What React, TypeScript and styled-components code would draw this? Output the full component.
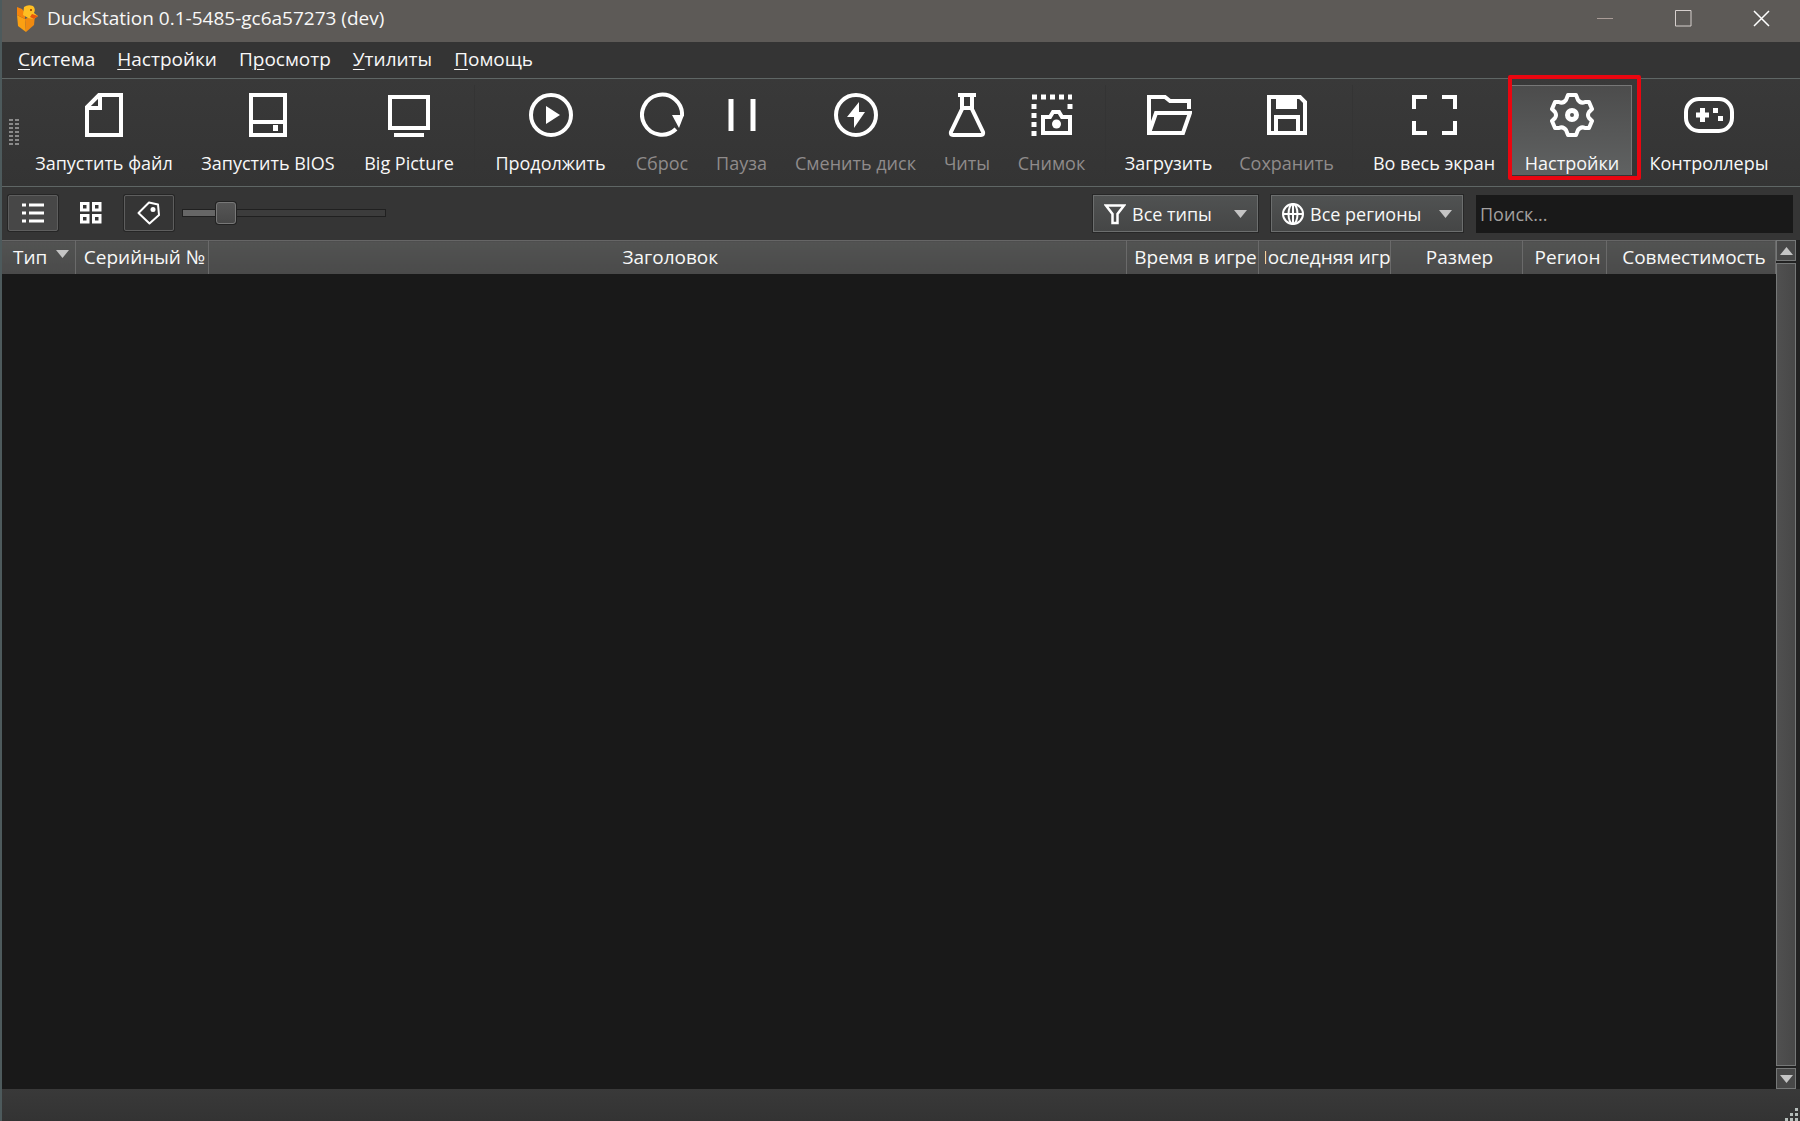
import React from "react";
import styled, { createGlobalStyle, css } from "styled-components";

const Global = createGlobalStyle`
  * { box-sizing: border-box; }
  html, body { margin: 0; background: #353535; }
  body, button, input, select {
    font-family: "Open Sans", "Noto Sans", sans-serif;
    font-size: 18px;
    line-height: 24px;
    color: #f8f8f8;
  }
  button, input, select { margin: 0; border: 0; padding: 0; background: none; border-radius: 0; }
  svg { display: block; flex: none; }
`;

const Window = styled.div`
  display: flex;
  flex-direction: column;
  height: 100vh;
  border-left: 2px solid #4d5a5c;
  background: #353535;
  overflow: hidden;
`;

const TitleBar = styled.header`
  display: flex;
  align-items: center;
  height: 42px;
  flex: none;
  padding: 0 0 6px 12px;
  background: #5d5a57;
`;

const Title = styled.h1`
  margin: 0 0 0 9px;
  flex: 1;
  font-size: 19px;
  font-weight: 400;
`;

const WindowButton = styled.button`
  display: grid;
  place-items: center;
  width: 78px;
  height: 36px;
`;

const MenuBar = styled.nav`
  display: flex;
  align-items: flex-start;
  gap: 22px;
  height: 36px;
  flex: none;
  padding: 5px 16px 0;
  background: #343434;
`;

const MenuButton = styled.button`
  font-size: 19px;
  u { text-underline-offset: 3px; text-decoration-thickness: 1px; }
`;

const ToolBar = styled.div`
  display: flex;
  align-items: flex-start;
  height: 109px;
  flex: none;
  padding: 6px 7px;
  border-top: 1px solid #5f6665;
  border-bottom: 1px solid #5f6665;
  background: linear-gradient(#393939, #343434);
`;

const Grip = styled.div`
  align-self: center;
  width: 10px;
  height: 28px;
  margin-right: 2px;
  background: repeating-linear-gradient(#8a8a8a 0 2px, transparent 2px 4px);
  mask: linear-gradient(90deg, #000 0 4px, transparent 4px 6px, #000 6px);
`;

const Separator = styled.div`
  width: 1px;
  height: 90px;
  margin: 0 5px;
  background: #343434;
`;

const Tool = styled.button<{ $width: number; $active?: boolean }>`
  display: flex;
  flex-direction: column;
  align-items: center;
  gap: 13px;
  flex: none;
  width: ${(p) => p.$width}px;
  height: 90px;
  padding-top: 7px;
  white-space: nowrap;
  &:disabled { color: #8f8b8b; }
  ${(p) =>
    p.$active &&
    css`
      position: relative;
      margin: 0 2px;
      background: linear-gradient(#4c4c4c, #606262);
      box-shadow: inset -1px 1px #777;
      &::after {
        content: "";
        position: absolute;
        inset: -10px -9px -5px -4px;
        border: 4px solid #ea0610;
        border-radius: 2px;
      }
    `}
`;

const Filters = styled.div`
  display: flex;
  align-items: center;
  height: 53px;
  flex: none;
  padding: 0 7px 0 6px;
`;

const ViewButton = styled.button<{ $framed?: boolean; $pressed?: boolean }>`
  display: grid;
  place-items: center;
  width: 50px;
  height: 36px;
  margin-right: 8px;
  border: 1px solid ${(p) => (p.$framed ? "#5e5e5e" : "transparent")};
  border-radius: 2px;
  background: ${(p) => (p.$pressed ? "#474747" : "transparent")};
  box-shadow: ${(p) => (p.$framed ? "0 0 0 1px #262626" : "none")};
`;

const Slider = styled.input`
  appearance: none;
  width: 204px;
  height: 22px;
  &::-webkit-slider-runnable-track {
    height: 8px;
    border: 1px solid #202020;
    background: linear-gradient(90deg, #666 0 20%, #3c3c3c 20%);
  }
  &::-webkit-slider-thumb {
    appearance: none;
    width: 20px;
    height: 22px;
    margin-top: -8px;
    border: 1px solid #787878;
    border-radius: 3px;
    background: linear-gradient(#565656, #484848);
    box-shadow: 0 0 0 1px #222;
  }
`;

const ViewControls = styled.div`
  display: flex;
  flex: 1;
  align-items: center;
  padding-bottom: 2px;
`;

const Combo = styled.label<{ $width: number }>`
  display: grid;
  grid-template-columns: 22px 1fr 14px;
  align-items: center;
  gap: 6px;
  width: ${(p) => p.$width}px;
  height: 37px;
  margin-right: 13px;
  padding: 0 9px 0 10px;
  border: 1px solid #6c6e6e;
  background: linear-gradient(#505252, #454646);
  box-shadow: 0 0 0 1px #272727;
`;

const Select = styled.select`
  appearance: none;
  min-width: 0;
  height: 24px;
`;

const Search = styled.input`
  width: 317px;
  height: 38px;
  padding: 0 4px;
  background: #191919;
  &::placeholder { color: #a3a09f; opacity: 1; }
`;

const Content = styled.main`
  display: flex;
  flex: 1;
  min-height: 0;
  background: #191919;
`;

const TableArea = styled.div`
  flex: 1;
  min-width: 0;
`;

const Table = styled.table`
  width: 100%;
  table-layout: fixed;
  border-collapse: collapse;
`;

const Head = styled.th<{ $width?: number }>`
  width: ${(p) => (p.$width ? `${p.$width}px` : "auto")};
  height: 33px;
  padding: 0 0 0 6px;
  font-size: 19px;
  font-weight: 400;
  background: linear-gradient(#525352, #4a4a4a);
  border-top: 1px solid #666;
  border-right: 1px solid #6a6a6a;
`;

const HeadLabel = styled.div`
  display: flex;
  justify-content: center;
  gap: 9px;
  overflow: hidden;
  white-space: nowrap;
  svg { margin-top: 5px; }
`;

const ScrollBar = styled.div`
  display: flex;
  flex-direction: column;
  gap: 2px;
  width: 24px;
  padding-right: 4px;
  background: #222;
`;

const ScrollButton = styled.button`
  display: grid;
  place-items: center;
  height: 21px;
  border: 1px solid #767878;
  background: #484848;
`;

const ScrollThumb = styled.div`
  flex: 1;
  border: 1px solid #767878;
  background: linear-gradient(90deg, #505050, #484848);
`;

const StatusBar = styled.footer`
  display: flex;
  align-items: flex-end;
  justify-content: flex-end;
  height: 32px;
  flex: none;
  padding-right: 2px;
  background: linear-gradient(#393939, #333);
`;

const Arrow = ({ up }: { up?: boolean }) => (
  <svg width="13" height="8" viewBox="0 0 13 8">
    <path d={up ? "M0 8 6.500 0 13 8Z" : "M0 0H13L6.500 8Z"} fill="#c4c4c4" />
  </svg>
);

const Icon = ({ children, size = 44 }: { children: React.ReactNode; size?: number }) => (
  <svg width={size} height="46" viewBox={`${(44 - size) / 2} 0 ${size} 46`} fill="none" stroke="#fff" strokeWidth="4">
    {children}
  </svg>
);

const icons = {
  file: <path d="M17 3H39V43H5V15ZM18 3V16H5" />,
  bios: (
    <>
      <path d="M5 3H39V43H5ZM5 30H39" />
      <path d="M27 33H32V39H27Z" fill="#fff" stroke="none" />
    </>
  ),
  screen: <path d="M3 5H41V36H3ZM7 43H37" />,
  resume: (
    <>
      <circle cx="22" cy="23" r="20" />
      <path d="M17 14 31 23 17 32Z" fill="#fff" stroke="none" />
    </>
  ),
  reset: (
    <>
      <path d="M36 37A20 20 0 1 1 42 24" />
      <path d="M32 23H44L39 36Z" fill="#fff" stroke="none" />
    </>
  ),
  pause: <path d="M11 7V39M33 7V39" strokeWidth="5" />,
  disc: (
    <>
      <circle cx="22" cy="23" r="20" />
      <path d="M25 10 13 25H20V36L31 20H25Z" fill="#fff" stroke="none" />
    </>
  ),
  cheats: <path d="M13 3H31M17 3V17L6 40Q5 43 8 43H36Q39 43 38 40L27 17V3M17 16H27" />,
  shot: (
    <>
      <path d="M2 5H42" strokeWidth="5" strokeDasharray="5 4" />
      <path d="M4 12V44M40 12V19" strokeWidth="5" strokeDasharray="5 4" />
      <path d="M13 25H20L23 20H29L32 25H40V41H13Z" />
      <circle cx="26.500" cy="32" r="4.500" fill="#fff" stroke="none" />
    </>
  ),
  load: <path d="M42 17V9H23L18 5H2V41H36L43 21H9L2 41" />,
  save: (
    <>
      <path d="M4 5H35L40 10V41H4Z" />
      <path d="M11 3H32V17H11Z" fill="#fff" stroke="none" />
      <path d="M11 41V25H33V41" />
    </>
  ),
  full: <path d="M2 17V5H15M30 5H43V17M43 29V41H30M15 41H2V29" />,
  gear: (
    <>
      <path
        d="M18 3H26L28 8Q31 12 35 10L39 10L42 17L39 20Q37 23 39 26L42 29L39 36L35 36Q31 34 28 38L26 43H18L16 38Q13 34 9 36L5 36L2 29L5 26Q7 23 5 20L2 17L5 10L9 10Q13 12 16 8Z"
        strokeLinejoin="round"
      />
      <circle cx="22" cy="23" r="4.500" strokeWidth="5" />
    </>
  ),
  pad: (
    <>
      <rect x="-1" y="7" width="46" height="32" rx="13" />
      <path d="M9 23H22M15.500 16V30" strokeWidth="5" />
      <path d="M26 16H31V21H26ZM31 24H36V29H31Z" fill="#fff" stroke="none" />
    </>
  ),
};

type ToolDef = { label: string; icon: keyof typeof icons; width: number; disabled?: boolean; active?: boolean };
const groups: ToolDef[][] = [
  [
    { label: "Запустить файл", icon: "file", width: 166 },
    { label: "Запустить BIOS", icon: "bios", width: 162 },
    { label: "Big Picture", icon: "screen", width: 120 },
  ],
  [
    { label: "Продолжить", icon: "resume", width: 141 },
    { label: "Сброс", icon: "reset", width: 82, disabled: true },
    { label: "Пауза", icon: "pause", width: 77, disabled: true },
    { label: "Сменить диск", icon: "disc", width: 151, disabled: true },
    { label: "Читы", icon: "cheats", width: 72, disabled: true },
    { label: "Снимок", icon: "shot", width: 97, disabled: true },
  ],
  [
    { label: "Загрузить", icon: "load", width: 115 },
    { label: "Сохранить", icon: "save", width: 121, disabled: true },
  ],
  [
    { label: "Во весь экран", icon: "full", width: 152 },
    { label: "Настройки", icon: "gear", width: 120, active: true },
    { label: "Контроллеры", icon: "pad", width: 150 },
  ],
];

const menus = [
  ["", "С", "истема"],
  ["", "Н", "астройки"],
  ["П", "р", "осмотр"],
  ["", "У", "тилиты"],
  ["", "П", "омощь"],
];

const columns: { label: string; width?: number; sorted?: boolean }[] = [
  { label: "Тип", width: 73, sorted: true },
  { label: "Серийный №", width: 133 },
  { label: "Заголовок" },
  { label: "Время в игре", width: 132 },
  { label: "Последняя игра", width: 132 },
  { label: "Размер", width: 132 },
  { label: "Регион", width: 84 },
  { label: "Совместимость", width: 169 },
];

export default function App() {
  return (
    <Window>
      <Global />
      <TitleBar>
        <svg width="24" height="28" viewBox="0 0 24 28">
          <path d="M3 11 11 15 12 28 4 22Z" fill="#fba012" />
          <path d="M11 15 21 11 20 21 12 28Z" fill="#f08a10" />
          <path d="M3 3 8 5 11 9 11 15 3 11Z" fill="#f5840c" />
          <path d="M10 3Q14 0 19 2Q22 5 20 9L24 12 20 15 14 14 9 11Z" fill="#ffbf22" />
          <path d="M18 10 24 12 20 15 16 13Z" fill="#e8560c" />
          <circle cx="17" cy="6" r="1" fill="#8a3a06" />
        </svg>
        <Title>DuckStation 0.1-5485-gc6a57273 (dev)</Title>
        <WindowButton aria-label="Свернуть">
          <svg width="17" height="17" stroke="#aa9c97"><path d="M0 8.500H16" /></svg>
        </WindowButton>
        <WindowButton aria-label="Развернуть">
          <svg width="17" height="17" fill="none" stroke="#d6cfcd"><path d="M.5 .5H16V16H.5Z" /></svg>
        </WindowButton>
        <WindowButton aria-label="Закрыть">
          <svg width="17" height="17" stroke="#fff" strokeWidth="1.500"><path d="M1 1 16 16M16 1 1 16" /></svg>
        </WindowButton>
      </TitleBar>

      <MenuBar>
        {menus.map(([pre, key, post]) => (
          <MenuButton key={pre + key + post}>{pre}<u>{key}</u>{post}</MenuButton>
        ))}
      </MenuBar>

      <ToolBar>
        <Grip />
        {groups.map((group, i) => (
          <React.Fragment key={i}>
            {i > 0 && <Separator />}
            {group.map((t) => (
              <Tool key={t.label} $width={t.width} $active={t.active} disabled={t.disabled}>
                <Icon size={t.icon === "pad" ? 50 : t.icon === "full" || t.icon === "load" ? 46 : 44}>{icons[t.icon]}</Icon>
                {t.label}
              </Tool>
            ))}
          </React.Fragment>
        ))}
      </ToolBar>

      <Filters>
        <ViewControls>
          <ViewButton $framed $pressed aria-label="Список">
            <svg width="22" height="22" stroke="#fff" strokeWidth="3"><path d="M7 3H22M7 11H22M7 19H22M0 3H4M0 11H4M0 19H4" /></svg>
          </ViewButton>
          <ViewButton aria-label="Сетка">
            <svg width="22" height="22" fill="none" stroke="#fff" strokeWidth="3">
              <path d="M1.500 1.500H8V8H1.500ZM13.500 1.500H20V8H13.500ZM1.500 13.500H8V20H1.500ZM13.500 13.500H20V20H13.500Z" />
            </svg>
          </ViewButton>
          <ViewButton $framed aria-label="Метки">
            <svg width="24" height="24" fill="none" stroke="#fff" strokeWidth="2">
              <path d="M12 1.500 21 3.500 22 14 12.500 22.500 1.500 12Z" strokeLinejoin="round" />
              <circle cx="16" cy="8.500" r="2.500" fill="#fff" stroke="none" />
            </svg>
          </ViewButton>
          <Slider type="range" min="0" max="100" defaultValue="18" aria-label="Размер" />
        </ViewControls>
        <Combo $width={165}>
          <svg width="22" height="22" fill="none" stroke="#fff" strokeWidth="2.500"><path d="M2 2.500H20L13.500 11V20H8.500V11Z" /></svg>
          <Select aria-label="Тип"><option>Все типы</option></Select>
          <Arrow />
        </Combo>
        <Combo $width={192}>
          <svg width="22" height="22" fill="none" stroke="#fff" strokeWidth="2">
            <circle cx="11" cy="11" r="10" /><ellipse cx="11" cy="11" rx="4.500" ry="10" /><path d="M1 11H21M11 1V21" />
          </svg>
          <Select aria-label="Регион"><option>Все регионы</option></Select>
          <Arrow />
        </Combo>
        <Search type="search" placeholder="Поиск..." aria-label="Поиск" />
      </Filters>

      <Content>
        <TableArea>
          <Table>
            <thead>
              <tr>
                {columns.map((c) => (
                  <Head key={c.label} $width={c.width}>
                    <HeadLabel>{c.label}{c.sorted && <Arrow />}</HeadLabel>
                  </Head>
                ))}
              </tr>
            </thead>
          </Table>
        </TableArea>
        <ScrollBar>
          <ScrollButton aria-label="Вверх"><Arrow up /></ScrollButton>
          <ScrollThumb />
          <ScrollButton aria-label="Вниз"><Arrow /></ScrollButton>
        </ScrollBar>
      </Content>
      <StatusBar>
        <svg width="14" height="14" fill="#b5bdba">
          <path d="M11 1h3v3h-3zM11 6h3v3h-3zM6 6h3v3h-3zM11 11h3v3h-3zM6 11h3v3h-3zM1 11h3v3h-3z" />
        </svg>
      </StatusBar>
    </Window>
  );
}
